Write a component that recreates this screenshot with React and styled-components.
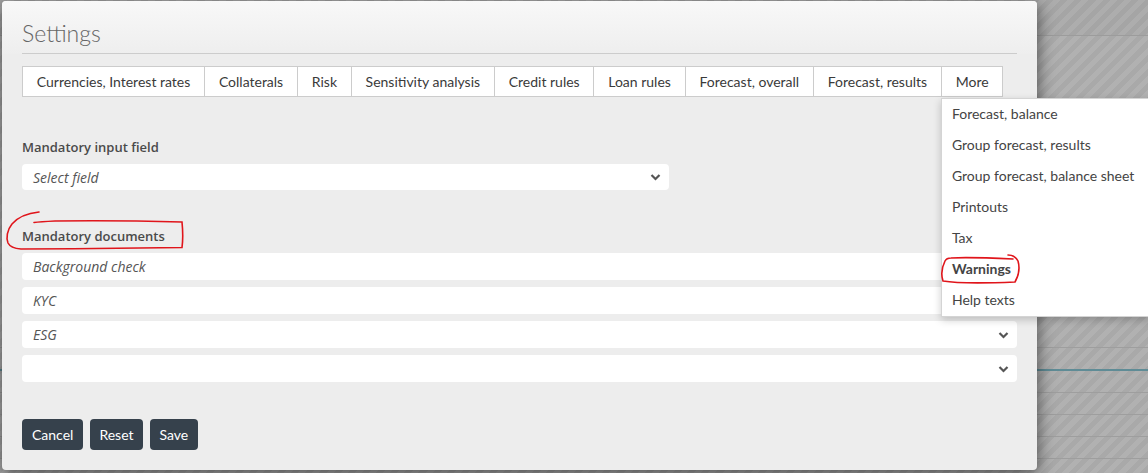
import React from "react";
import styled, { createGlobalStyle } from "styled-components";

const Global = createGlobalStyle`
  html, body { margin: 0; padding: 0; overflow: hidden; }
  body { font-family: Lato, "Open Sans", sans-serif; }
`;

const Screen = styled.div`
  position: relative;
  width: 1148px;
  height: 473px;
  overflow: hidden;
  background-color: #aaaaaa;
`;

const Page = styled.div`
  display: flex;
  flex-direction: column;
  height: 100%;
  background: repeating-linear-gradient(
    135deg,
    #a9a9a9 0px,
    #a9a9a9 5px,
    #b1b1b1 5px,
    #b1b1b1 10px
  );
`;

const TopBand = styled.div`
  height: 35px;
  border-bottom: 1px solid #9c9c9c;
  background: rgba(0, 0, 0, 0.02);
  flex: none;
`;

const Spacer = styled.div`
  height: 311px;
  flex: none;
`;

const BgRow = styled.div`
  height: 21px;
  flex: none;
  border-top: ${(p) => (p.$accent ? "2px solid #5f8c96" : "1px solid #9e9e9e")};
`;

const Modal = styled.div`
  position: absolute;
  top: 1px;
  left: 2px;
  width: 1035px;
  height: 469px;
  background: #ededed;
  border-radius: 4px;
  box-shadow: 0 4px 18px rgba(0, 0, 0, 0.6);
  display: flex;
  flex-direction: column;
  box-sizing: border-box;
`;

const Header = styled.div`
  padding: 0 20px;
  background: linear-gradient(#f8f8f8, #eeeeee);
  border-radius: 4px 4px 0 0;
`;

const HeaderInner = styled.div`
  padding-top: 18px;
  padding-bottom: 6px;
  border-bottom: 1px solid #cccccc;
`;

const Title = styled.h1`
  margin: 0;
  font-size: 23px;
  line-height: 28px;
  font-weight: 300;
  color: #666;
`;

const Body = styled.div`
  padding: 12px 20px 0;
  display: flex;
  flex-direction: column;
`;

const Tabs = styled.div`
  display: flex;
  align-items: stretch;
`;

const Tab = styled.div`
  position: relative;
  height: 29px;
  line-height: 29px;
  padding: 0 13.8px;
  background: #fff;
  border: 1px solid #cccccc;
  margin-left: -1px;
  font-size: 14px;
  color: #3a3a3a;
  white-space: nowrap;
  &:first-child { margin-left: 0; }
`;

const Menu = styled.div`
  position: absolute;
  top: 31px;
  left: -1px;
  width: 207px;
  background: #fff;
  border: 1px solid #d4d4d4;
  box-shadow: 0 3px 8px rgba(0, 0, 0, 0.2);
  z-index: 5;
`;

const MenuItem = styled.div`
  position: relative;
  height: 31px;
  line-height: 30px;
  padding-left: 10px;
  font-size: 14px;
  color: #444;
  font-weight: ${(p) => (p.$bold ? 700 : 400)};
  white-space: nowrap;
`;

const Label = styled.div`
  position: relative;
  align-self: flex-start;
  font-family: "Open Sans", sans-serif;
  font-size: 13px;
  line-height: 18px;
  font-weight: 600;
  color: #4a4a4a;
  margin-top: ${(p) => p.$top}px;
`;

const SelectBox = styled.div`
  display: flex;
  align-items: center;
  justify-content: space-between;
  box-sizing: border-box;
  width: ${(p) => p.$width || "100%"};
  height: ${(p) => p.$h || 27}px;
  margin-top: ${(p) => p.$top}px;
  padding: 0 8px 0 11px;
  background: #fff;
  border-radius: 4px;
  font-family: "Open Sans", sans-serif;
  font-size: 14px;
  font-style: italic;
  color: #555;
`;

const Buttons = styled.div`
  display: flex;
  gap: 7px;
  margin-top: 37px;
`;

const Button = styled.button`
  height: 31px;
  padding: 0 ${(p) => p.$pad || 10}px;
  border: none;
  border-radius: 4px;
  background: #36414c;
  color: #fff;
  font-family: Lato, sans-serif;
  font-size: 14px;
`;

const Scribble = styled.svg`
  position: absolute;
  pointer-events: none;
  overflow: visible;
`;

const Chevron = () => (
  <svg width="11" height="8" viewBox="0 0 11 8">
    <polyline points="1.5,2 5.5,6 9.5,2" fill="none" stroke="#555" strokeWidth="2.2" />
  </svg>
);

const tabs = [
  "Currencies, Interest rates",
  "Collaterals",
  "Risk",
  "Sensitivity analysis",
  "Credit rules",
  "Loan rules",
  "Forecast, overall",
  "Forecast, results",
];

const menuItems = [
  "Forecast, balance",
  "Group forecast, results",
  "Group forecast, balance sheet",
  "Printouts",
  "Tax",
  "Warnings",
  "Help texts",
];

export default function App() {
  return (
    <>
      <Global />
      <Screen>
        <Page>
          <TopBand />
          <Spacer />
          <BgRow />
          <BgRow $accent />
          <BgRow />
          <BgRow />
          <BgRow />
          <BgRow />
        </Page>
        <Modal>
          <Header>
            <HeaderInner>
              <Title>Settings</Title>
            </HeaderInner>
          </Header>
          <Body>
            <Tabs>
              {tabs.map((t) => (
                <Tab key={t}>{t}</Tab>
              ))}
              <Tab>
                More
                <Menu>
                  {menuItems.map((m) => (
                    <MenuItem key={m} $bold={m === "Warnings"}>
                      {m}
                      {m === "Warnings" && (
                        <Scribble
                          width="84"
                          height="34"
                          viewBox="0 0 84 34"
                          style={{ left: -1, top: -1 }}
                        >
                          <path
                            d="M4 8 C1 14 0 22 2 28 C20 31 50 30 74 29 C78 22 79 15 77 8 C75 4 72 2 67 2 M72 6 C50 5 28 4 10 5 C7 5 5 6 4 8"
                            fill="none"
                            stroke="#e0151b"
                            strokeWidth="1.6"
                            strokeLinecap="round"
                          />
                        </Scribble>
                      )}
                    </MenuItem>
                  ))}
                </Menu>
              </Tab>
            </Tabs>

            <Label $top={41}>Mandatory input field</Label>
            <SelectBox $top={8} $h={26} $width="647px">
              Select field
              <Chevron />
            </SelectBox>

            <Label $top={37}>
              Mandatory documents
              <Scribble
                width="190"
                height="40"
                viewBox="0 0 190 40"
                style={{ left: -17, top: -15 }}
              >
                <path
                  d="M34 0 C24 1 13 5 7 12 C2 18 1 26 3 31 C5 35 9 36.5 16 37 C70 37 130 36 177 35.5 C178 28 178 20 177 10 C140 9 90 8.5 50 9 C40 9.5 33 10 29 10.5"
                  fill="none"
                  stroke="#e0151b"
                  strokeWidth="1.6"
                  strokeLinecap="round"
                />
              </Scribble>
            </Label>
            <SelectBox $top={8}>Background check</SelectBox>
            <SelectBox $top={7}>KYC</SelectBox>
            <SelectBox $top={7}>
              ESG
              <Chevron />
            </SelectBox>
            <SelectBox $top={7}>
              <span />
              <Chevron />
            </SelectBox>

            <Buttons>
              <Button>Cancel</Button>
              <Button $pad={9}>Reset</Button>
              <Button>Save</Button>
            </Buttons>
          </Body>
        </Modal>
      </Screen>
    </>
  );
}
